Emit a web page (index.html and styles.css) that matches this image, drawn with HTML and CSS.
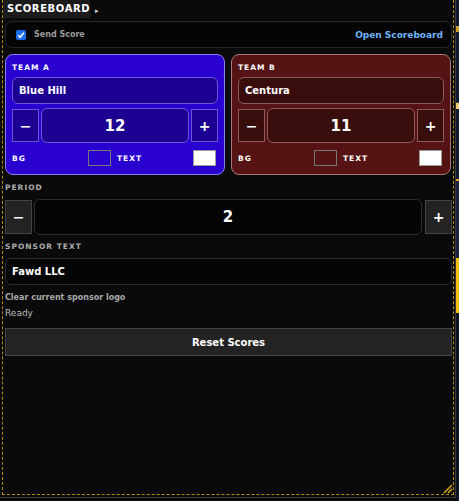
FILE: index.html
```html
<!DOCTYPE html>
<html>
<head>
<meta charset="utf-8">
<link rel="stylesheet" href="styles.css">
</head>
<body>
<div class="frame">
  <div class="panel">
    <div class="tabline">
      <div class="tab">SCOREBOARD</div>
      <span class="caret">&#9656;</span>
    </div>
    <div class="sendrow">
      <label class="send"><span class="check"><svg viewBox="0 0 10 10" width="10" height="10"><path d="M2.2 5.2 L4.2 7.2 L7.9 2.8" fill="none" stroke="#fff" stroke-width="1.6"/></svg></span>Send Score</label>
      <span class="open">Open Scoreboard</span>
    </div>
    <div class="teams">
      <div class="card team-a">
        <div class="tlabel">TEAM A</div>
        <div class="name">Blue Hill</div>
        <div class="scorerow">
          <div class="btn">&minus;</div>
          <div class="score">12</div>
          <div class="btn">+</div>
        </div>
        <div class="colors">
          <div class="half"><span class="clabel">BG</span><span class="sw sw-a"></span></div>
          <div class="half"><span class="clabel">TEXT</span><span class="sw sw-white"></span></div>
        </div>
      </div>
      <div class="card team-b">
        <div class="tlabel">TEAM B</div>
        <div class="name">Centura</div>
        <div class="scorerow">
          <div class="btn">&minus;</div>
          <div class="score">11</div>
          <div class="btn">+</div>
        </div>
        <div class="colors">
          <div class="half"><span class="clabel">BG</span><span class="sw sw-b"></span></div>
          <div class="half"><span class="clabel">TEXT</span><span class="sw sw-white"></span></div>
        </div>
      </div>
    </div>
    <div class="slabel period-label">PERIOD</div>
    <div class="periodrow">
      <div class="pbtn">&minus;</div>
      <div class="pval">2</div>
      <div class="pbtn">+</div>
    </div>
    <div class="slabel sponsor-label">SPONSOR TEXT</div>
    <div class="sponsor">Fawd LLC</div>
    <div class="clear">Clear current sponsor logo</div>
    <div class="ready">Ready</div>
    <div class="reset">Reset Scores</div>
    <div class="grip"><svg viewBox="0 0 12 12" width="12" height="12"><path d="M11 3 L3 11 M11 7 L7 11" stroke="#d4a514" stroke-width="1.6"/></svg></div>
  </div>
</div>
<div class="strip">
  <div class="s1"></div><div class="s2"></div><div class="s3"></div><div class="s4"></div><div class="s5"></div><div class="s6"></div><div class="s7"></div>
</div>
</body>
</html>
```
FILE: styles.css
```css
html, body { margin: 0; padding: 0; }
body {
  background: #0a0a0a;
  display: flex;
  width: 459px;
  height: 501px;
  overflow: hidden;
  font-family: "DejaVu Sans", Verdana, sans-serif;
  color: #fff;
}
.frame {
  width: 455px;
  height: 497px;
  border-right: 1px solid #3a3a3a;
  border-bottom: 1px solid #3a3a3a;
  flex: none;
}
.panel {
  position: relative;
  margin-left: 2px;
  border: 1px dashed #b48c10;
  border-top: none;
  padding: 0 1px 0 2px;
  box-sizing: border-box;
  width: 452px;
  height: 495px;
}
.tabline { display: flex; align-items: flex-end; height: 18px; margin-left: -2px; }
.tab {
  background: #1b1b1b;
  height: 18px;
  width: 87px;
  box-sizing: border-box;
  padding: 2px 0 0 4px;
  font-weight: bold;
  font-size: 10px;
  letter-spacing: 0.6px;
  line-height: 14px;
}
.caret { font-size: 7px; color: #ddd; margin: 0 0 3px 5px; line-height: 8px; }
.sendrow {
  margin-top: 3px;
  height: 27px;
  box-sizing: border-box;
  border: 1px solid #262626;
  border-radius: 7px;
  background: #050505;
  display: flex;
  align-items: center;
  justify-content: space-between;
  padding: 0 8px 0 10px;
}
.send { display: flex; align-items: center; font-size: 8px; font-weight: bold; color: #9c9c9c; }
.check {
  width: 10px; height: 10px; border-radius: 2px; background: #1a6ff0;
  display: inline-flex; margin-right: 8px;
}
.open { font-size: 9px; font-weight: bold; color: #6fb3f5; }
.teams { display: flex; gap: 6px; margin-top: 6px; }
.card {
  width: 220px;
  height: 121px;
  box-sizing: border-box;
  border-radius: 8px;
  padding: 8px 6px 0 6px;
  display: flex;
  flex-direction: column;
}
.team-a { background: #2a00d0; border: 1px solid #8c7cf4; }
.team-b { background: #551413; border: 1px solid #a77676; }
.tlabel { font-size: 7.5px; font-weight: bold; letter-spacing: 1px; line-height: 9px; height: 9px; }
.name {
  margin-top: 5px;
  height: 27px;
  box-sizing: border-box;
  border-radius: 6px;
  padding-left: 6px;
  font-size: 10px;
  font-weight: bold;
  display: flex;
  align-items: center;
}
.team-a .name, .team-a .score, .team-a .btn { background: #1d0091; border: 1px solid #6a58d2; }
.team-b .name, .team-b .score, .team-b .btn { background: #3a0d0d; border: 1px solid #8c5c5c; }
.scorerow { display: flex; align-items: center; gap: 2px; margin-top: 4px; height: 35px; }
.btn {
  width: 27px; height: 33px; box-sizing: border-box;
  display: flex; align-items: center; justify-content: center;
  font-size: 14px; font-weight: bold;
}
.score {
  flex: 1; height: 35px; box-sizing: border-box; border-radius: 6px;
  display: flex; align-items: center; justify-content: center;
  font-size: 15px; font-weight: bold;
}
.colors { display: grid; grid-template-columns: 1fr 1fr; column-gap: 6px; margin-top: 7px; padding-right: 2px; }
.half { display: flex; align-items: center; justify-content: space-between; height: 16px; }
.clabel { font-size: 7.5px; font-weight: bold; letter-spacing: 1px; }
.sw { width: 23px; height: 16px; box-sizing: border-box; border: 1px solid #777; }
.sw-a { background: #2a00d0; }
.sw-b { background: #551413; }
.sw-white { background: #fff; border-color: #999; }
.slabel { font-size: 7.5px; font-weight: bold; letter-spacing: 1px; color: #aeaeae; line-height: 9px; }
.period-label { margin-top: 8px; }
.periodrow { display: flex; align-items: center; margin-top: 7px; height: 36px; }
.pbtn {
  width: 27px; height: 34px; box-sizing: border-box;
  background: #232323; border: 1px solid #444;
  display: flex; align-items: center; justify-content: center;
  font-size: 14px; font-weight: bold;
}
.pval {
  flex: 1; height: 36px; box-sizing: border-box; margin: 0 3px 0 2px;
  background: #050505; border: 1px solid #2c2c2c; border-radius: 6px;
  display: flex; align-items: center; justify-content: center;
  font-size: 15px; font-weight: bold;
}
.sponsor-label { margin-top: 7px; }
.sponsor {
  margin-top: 7px; height: 27px; box-sizing: border-box;
  background: #050505; border: 1px solid #2c2c2c; border-radius: 6px;
  padding-left: 6px; display: flex; align-items: center;
  font-size: 10px; font-weight: bold;
}
.clear { margin-top: 8px; font-size: 8px; font-weight: bold; color: #a8a8a8; line-height: 10px; }
.ready { margin-top: 4px; font-size: 9px; color: #bcbcbc; line-height: 12px; }
.reset {
  margin-top: 9px; height: 28px; box-sizing: border-box;
  background: #232323; border: 1px solid #444;
  display: flex; align-items: center; justify-content: center;
  font-size: 10px; font-weight: bold;
}
.grip { position: absolute; right: 0; bottom: 0; width: 12px; height: 12px; line-height: 0; }
.strip { flex: none; width: 3px; height: 501px; background: #0c1322; display: flex; flex-direction: column; }
.strip div { flex: none; }
.s1 { height: 26px; background: #111a2c; }
.s2 { height: 6px; background: #c9a02a; }
.s3 { height: 70px; background: #0f1a33; border-bottom: 1px solid #2a3a5a; }
.s4 { height: 6px; background: #e8d070; }
.s5 { height: 70px; background: #111c30; }
.s6 { height: 77px; background: #18243e; border-top: 2px solid #e0a020; }
.s7 { height: 55px; background: #f2c013; }
```
